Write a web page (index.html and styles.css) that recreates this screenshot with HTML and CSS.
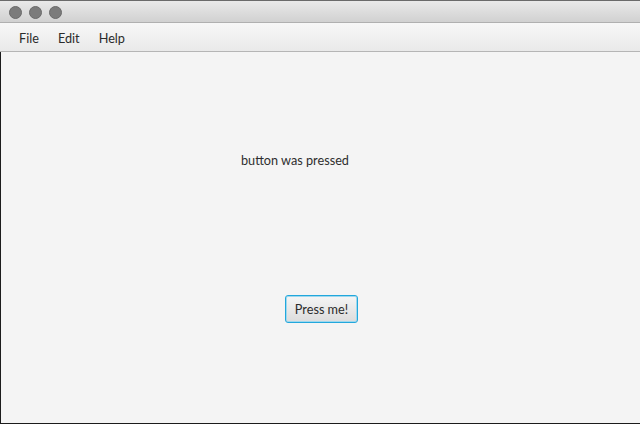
FILE: index.html
```html
<!DOCTYPE html>
<html>
<head>
<meta charset="utf-8">
<link rel="stylesheet" href="styles.css">
</head>
<body>
<div class="window">
  <div class="titlebar">
    <span class="light"></span>
    <span class="light"></span>
    <span class="light"></span>
  </div>
  <div class="menubar">
    <span class="menu">File</span>
    <span class="menu">Edit</span>
    <span class="menu">Help</span>
  </div>
  <div class="content">
    <div class="label">button was pressed</div>
    <button class="btn">Press me!</button>
  </div>
</div>
</body>
</html>
```
FILE: styles.css
```css
html, body {
  margin: 0;
  padding: 0;
  width: 640px;
  height: 424px;
  overflow: hidden;
  background: #f4f4f4;
  font-family: Lato, "Liberation Sans", sans-serif;
}
.window {
  width: 640px;
  height: 424px;
  display: flex;
  flex-direction: column;
  box-sizing: border-box;
}
.titlebar {
  height: 22px;
  box-sizing: border-box;
  border-top: 1px solid #6a6a6a;
  background: linear-gradient(#e9e9e9, #d1d1d1);
  display: flex;
  align-items: center;
  gap: 7px;
  padding-left: 9px;
  padding-top: 1px;
}
.light {
  width: 13px;
  height: 13px;
  border-radius: 50%;
  background: #7b7b7b;
  border: 1px solid #6a6a6a;
  box-sizing: border-box;
}
.menubar {
  height: 30px;
  box-sizing: border-box;
  background: linear-gradient(#f7f7f7, #e9e9e9);
  border-top: 1px solid #b0b0b0;
  border-bottom: 1px solid #b5b5b5;
  display: flex;
  align-items: center;
  padding-left: 19px;
  gap: 19px;
  font-size: 12.7px;
  color: #2b2b2b;
  padding-top: 1px;
}
.content {
  flex: 1;
  position: relative;
  border-left: 1px solid #1c1c1c;
  border-bottom: 1px solid #1c1c1c;
  background: #f4f4f4;
}
.label {
  position: absolute;
  left: 240px;
  top: 100px;
  font-size: 12.7px;
  color: #2e2e2e;
}
.btn {
  position: absolute;
  left: 284px;
  top: 243px;
  width: 73px;
  height: 28px;
  box-sizing: border-box;
  border: 1px solid #22a7dc;
  border-radius: 3px;
  box-shadow: inset 0 0 0 1px #9fd8ee;
  background: linear-gradient(#f5f5f5, #dcdcdc);
  font-family: Lato, "Liberation Sans", sans-serif;
  font-size: 12.7px;
  color: #2b2b2b;
  padding: 0;
}
```
